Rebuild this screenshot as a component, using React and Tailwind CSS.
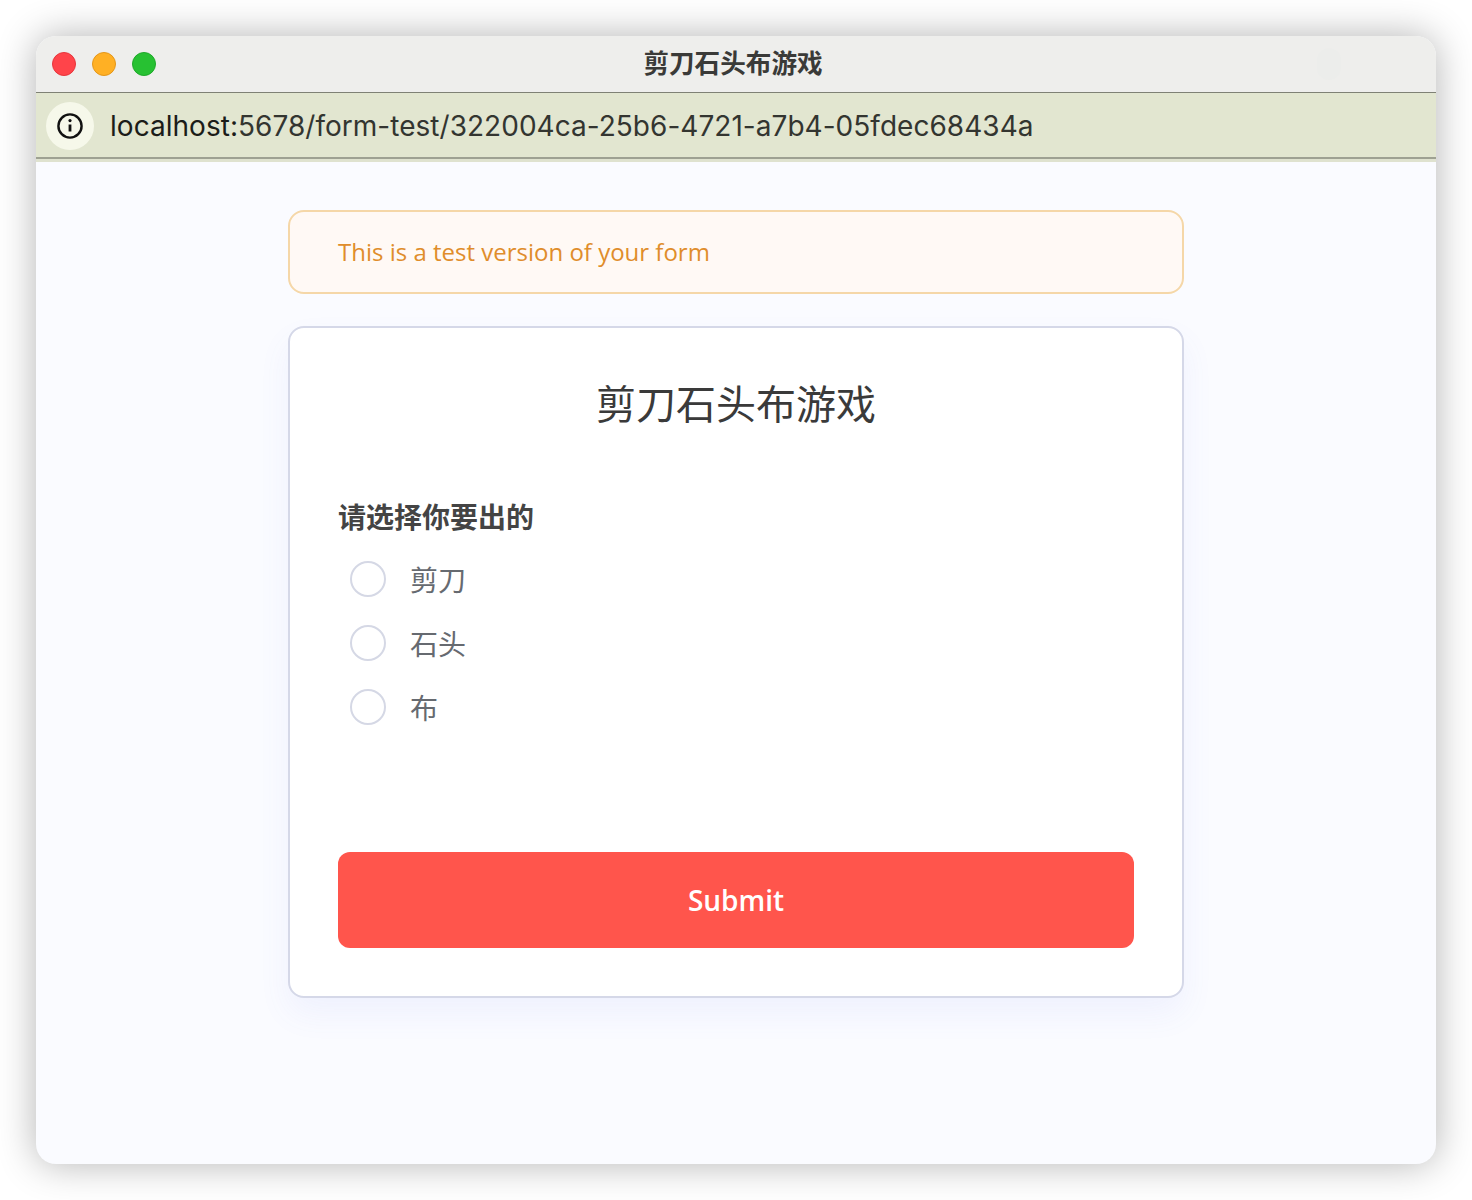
const cjk = "font-['Open_Sans','Noto_Sans_CJK_SC',sans-serif]";

function Dot({ color }) {
  return <span className={`block w-6 h-6 rounded-full border ${color}`} />;
}

function Option({ label }) {
  return (
    <label className="flex items-center h-9 pl-3">
      <span className="block w-9 h-9 rounded-full border-2 border-[#d5d8e5] bg-white" />
      <span className="ml-6 text-[28px] leading-9 text-[#666a70] translate-y-px">{label}</span>
    </label>
  );
}

export default function App() {
  return (
    <div className={`bg-white h-[1200px] pt-9 px-9 ${cjk}`}>
      <div className="h-[1128px] rounded-[20px] overflow-hidden bg-[#fafbff] flex flex-col shadow-[0_0_38px_rgba(0,0,0,0.3)]">
        <div className="relative h-[57px] shrink-0 flex items-center pl-4 gap-4 bg-[#eeeeec] border-b border-[#7f8175]">
          <Dot color="bg-[#ff444a] border-[#e5363c]" />
          <Dot color="bg-[#ffb024] border-[#e3961a]" />
          <Dot color="bg-[#27c132] border-[#1fa82a]" />
          <span className="absolute left-0 right-0 top-[13px] text-center text-[25.6px] leading-[30px] font-bold text-[#3a3a38] -translate-x-[3px]">
            剪刀石头布游戏
          </span>
          <span className="absolute left-[1281px] top-3 w-6 h-8 rounded-full bg-[#ecedeb]" />
        </div>

        <div className="h-[66px] shrink-0 flex items-center pl-[10px] pt-px bg-[#e2e6d0] border-b-2 border-[#9ea192]">
          <span className="w-12 h-12 rounded-full bg-[#f6f8ea] flex items-center justify-center">
            <svg width="28" height="28" viewBox="0 0 28 28" fill="none" stroke="#111" strokeWidth="2.4">
              <circle cx="14" cy="14" r="11.6" />
              <path d="M14 12.5v7" strokeWidth="2.8" />
              <circle cx="14" cy="8.6" r="1.6" fill="#111" stroke="none" />
            </svg>
          </span>
          <span className="ml-4 text-[28px] leading-9 text-[#333530] font-['Inter',sans-serif] tracking-[0.03px]">
            <span className="text-[#1b1c19]">localhost:</span>5678/form-test/322004ca-25b6-4721-a7b4-05fdec68434a
          </span>
        </div>
        <div className="h-[3px] shrink-0 bg-[#dfe2cf]" />

        <main className="w-[896px] mx-auto pt-12 flex flex-col gap-8">
          <div className="h-[84px] flex items-center px-12 rounded-2xl border-2 border-[#f5d7a8] bg-[#fff9f5] text-[24px] text-[#e08d2b]">
            This is a test version of your form
          </div>

          <div className="h-[672px] flex flex-col px-12 rounded-2xl border-2 border-[#d5d8e8] bg-white shadow-[0_16px_32px_rgba(100,110,240,0.07)]">
            <h1 className="mt-[49px] text-center text-[40px] leading-[54px] font-normal text-[#3a3a3a]">
              剪刀石头布游戏
            </h1>
            <p className="mt-[68px] text-[28px] leading-9 font-bold text-[#444444]">请选择你要出的</p>
            <div className="mt-[26px] flex flex-col gap-7">
              <Option label="剪刀" />
              <Option label="石头" />
              <Option label="布" />
            </div>
            <button className="mt-[127px] h-24 rounded-xl bg-[#ff554c] text-white text-[28px] font-semibold">
              Submit
            </button>
          </div>
        </main>
      </div>
    </div>
  );
}
